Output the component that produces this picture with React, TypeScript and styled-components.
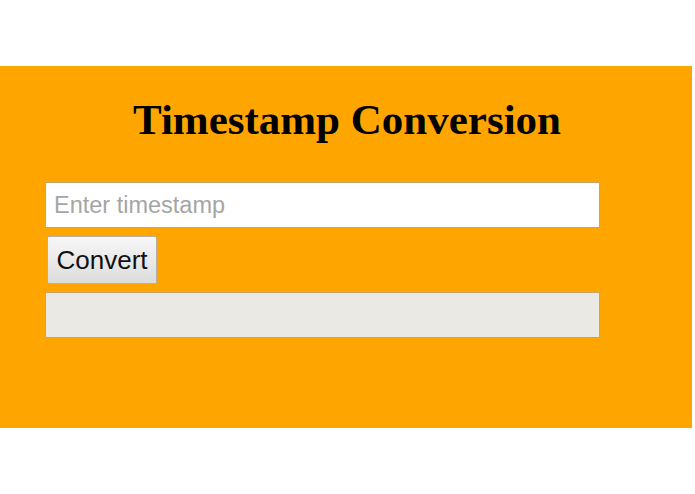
import React from "react";
import styled, { createGlobalStyle } from "styled-components";

const Global = createGlobalStyle`
  html, body { margin: 0; padding: 0; background: #ffffff; }
  body { width: 695px; height: 494px; overflow: hidden; }
`;

const Page = styled.div`
  padding-top: 66px;
`;

const Panel = styled.section`
  width: 692px;
  height: 362px;
  background: #ffa500;
  box-sizing: border-box;
  padding: 28px 0 0 45px;
  display: flex;
  flex-direction: column;
`;

const Title = styled.h1`
  margin: 0 0 0 -43px;
  text-align: center;
  font-family: "Liberation Serif", "Times New Roman", serif;
  font-weight: bold;
  font-size: 43px;
  line-height: 52px;
  color: #000;
`;

const Form = styled.div`
  margin-top: 36px;
  display: flex;
  flex-direction: column;
  align-items: flex-start;
`;

const Field = styled.input`
  width: 555px;
  height: 46px;
  box-sizing: border-box;
  border: 1px solid #c9a46a;
  background: #ffffff;
  padding: 0 8px;
  font-family: "Liberation Sans", Arial, sans-serif;
  font-size: 23.5px;
  color: #000;
  outline: none;
  &::placeholder { color: #a5a5a5; }
`;

const Button = styled.button`
  margin: 8px 0 0 2px;
  width: 110px;
  height: 48px;
  box-sizing: border-box;
  border: 1px solid #b8b0a4;
  border-radius: 2px;
  background: linear-gradient(#f7f7f7, #dcdcdc);
  font-family: "Liberation Sans", Arial, sans-serif;
  font-size: 26px;
  color: #111;
  padding: 0;
`;

const Output = styled.div`
  margin-top: 8px;
  width: 555px;
  height: 46px;
  box-sizing: border-box;
  border: 1px solid #c9a46a;
  background: #ebe9e4;
`;

export default function App() {
  return (
    <Page>
      <Global />
      <Panel>
        <Title>Timestamp Conversion</Title>
        <Form>
          <Field placeholder="Enter timestamp" />
          <Button>Convert</Button>
          <Output />
        </Form>
      </Panel>
    </Page>
  );
}
